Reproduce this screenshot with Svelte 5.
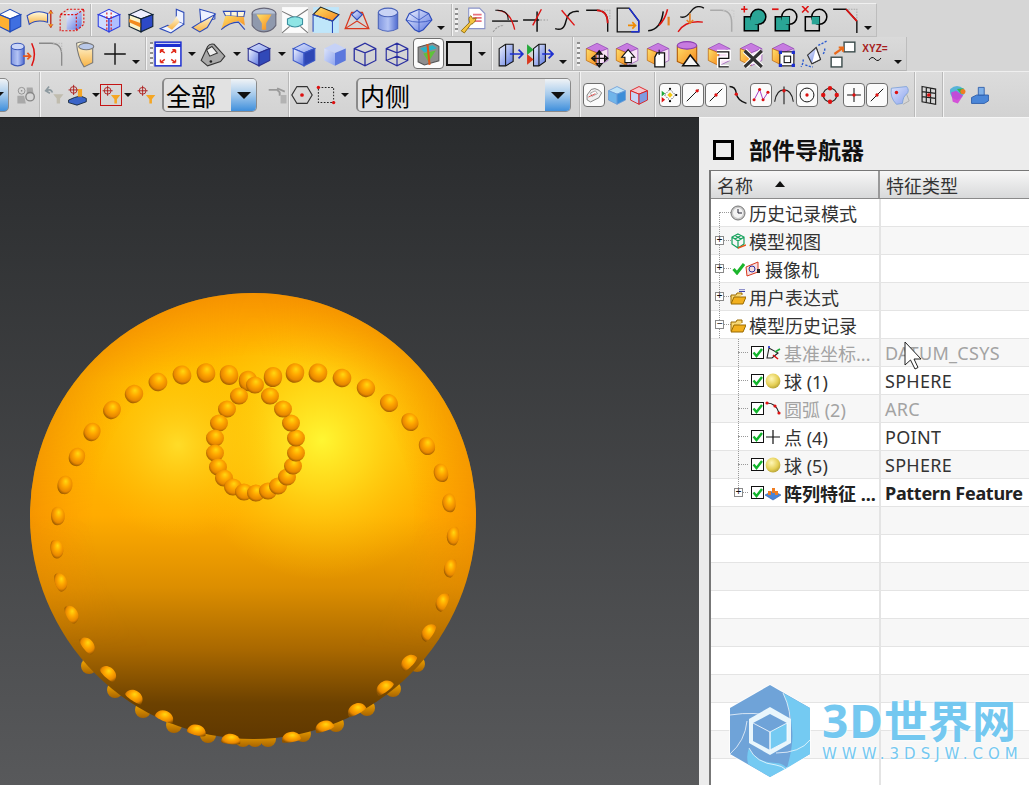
<script lang="ts">
    // small builders for the toolbar glyphs, all on a 26x26 box
    const cube = (t, f, s, st = "#1c2fa8") =>
        `<path d="M3 8 13 3 23 8 13 12Z" fill="${t}" stroke="${st}"/><path d="M3 8 13 12V24L3 19Z" fill="${f}" stroke="${st}"/><path d="M23 8 13 12V24L23 19Z" fill="${s}" stroke="${st}"/>`;
    const opCube = (extra) =>
        `<path d="M4 8 14 3 24 8 14 12Z" fill="#c77be0" stroke="#8a3fb0" stroke-width=".6"/><path d="M4 8 14 12V24L4 19Z" fill="url(#gOrange)" stroke="#b35a00" stroke-width=".6"/><path d="M24 8 14 12V24L24 19Z" fill="#f7e2f5" stroke="#8a3fb0" stroke-width=".6"/>${extra}`;
    const boole = (sq, ci, mark) =>
        `<rect x="4" y="10" width="13" height="13" fill="${sq}" stroke="#000" stroke-width="1.4"/><circle cx="17" cy="10" r="7" fill="${ci}" stroke="#000" stroke-width="1.4"/><path d="M10 10h7v7h-7z" fill="#2aa596"/>${mark}`;

    const icons = {
        op0: cube("#fff", "#ffb030", "#3f6fe0", "#204ab8"),
        band: `<path d="M1 9Q10 3 20 7V15Q10 12 3 17Z" fill="url(#gYellow)" stroke="#2b49b8"/><path d="M23 4V20" stroke="#c0392b" stroke-width="1.4"/><path d="M21 7l2-3 2 3M21 17l2 3 2-3" fill="#f39c12" stroke="#c0392b" stroke-width=".7"/>`,
        rbox: `<path d="M8 22V9Q8 5 13 5H22V16Q22 22 16 22Z" fill="url(#gBlue)"/><path d="M2 21V8L9 3H24V17L17 23H2ZM2 8H17V23M17 8 24 3" fill="none" stroke="#d11" stroke-dasharray="2 1.4"/>`,
        bcut: cube("#eef2ff", "#cfdcff", "#aebfff", "#2f3fe0") + `<path d="M11 6V22M15 6V22" stroke="#d11" stroke-dasharray="2 1.5"/>`,
        bstripe: `<path d="M2 8 13 3 24 8 13 12Z" fill="#eef" stroke="#123"/><path d="M2 8 13 12V24L2 19Z" fill="#f9f3c9" stroke="#123"/><path d="M2 12 13 16V20L2 15Z" fill="#f38a1d"/><path d="M24 8 13 12V24L24 19Z" fill="#2d49c8" stroke="#123"/>`,
        sheet1: `<path d="M17 3 24 6V17L17 14Z" fill="#eef2ff" stroke="#2b49b8"/><path d="M17 14Q16 20 9 18L2 21 12 25 24 17" fill="#f0f4ff" stroke="#2b49b8"/><path d="M17 9Q14 17 8 19L13 22 20 15Z" fill="url(#gYellow)"/>`,
        sheet2: `<path d="M10 3 24 7V12L11 15Z" fill="#eef2ff" stroke="#2b49b8"/><path d="M11 15 3 20 10 24 17 20 24 8Z" fill="url(#gYellow)" stroke="#2b49b8"/>`,
        sheet3: `<path d="M4 5 24 5 23 10 6 9Z" fill="#fff6d9" stroke="#2b49b8"/><path d="M6 9 23 10 24 18 18 14Q10 15 2 22Z" fill="url(#gOrange)"/><path d="M2 22Q10 15 18 15L24 22" fill="none" stroke="#2b49b8"/><path d="M11 5V9M17 5V10" stroke="#2b49b8"/>`,
        funnel: `<ellipse cx="13" cy="7" rx="11" ry="5" fill="#b9c4d8" stroke="#667"/><path d="M2 7V18Q6 24 13 24 20 24 24 18V7" fill="#8f99ad" stroke="#667"/><path d="M6 8H20L15 16V22H11V16Z" fill="url(#gOrange)"/>`,
        corner: `<rect x="1" y="1" width="24" height="24" fill="#fbfbfb"/><path d="M1 5 13 11 25 3M1 25 8 19M25 25 18 19" stroke="#777" fill="none"/><path d="M6 12Q13 8 20 12V17Q13 22 6 17Z" fill="#8ee5e5" stroke="#3a8f9f"/>`,
        slab: `<rect x="1" y="1" width="24" height="24" fill="#bfe6fa"/><path d="M1 8 8 1 25 8 19 14Z" fill="url(#gOrange)" stroke="#222"/><path d="M1 8V24M19 14V25M1 8 19 14M19 14 25 8" stroke="#2b49b8" fill="none"/>`,
        pyr: `<path d="M2 21 8 6H18L24 21Z" fill="none" stroke="#d9381e" stroke-width="1.2"/><path d="M13 14 2 21M13 14 24 21" stroke="#d9381e"/><path d="M8 8 13 4 18 8 13 13Z" fill="url(#gBlue)" stroke="#2b49b8"/>`,
        cyl: `<path d="M4 6V21Q13 26 22 21V6" fill="url(#gBlueH)" stroke="#4a62b8"/><ellipse cx="13" cy="6" rx="9" ry="4" fill="#c9d3f5" stroke="#4a62b8"/>`,
        diam: `<path d="M13 3 22 7 25 13 17 22 13 24 9 22 1 13 4 7Z" fill="url(#gBlue)" stroke="#2b49b8"/><path d="M1 13Q13 17 25 13M4 7 13 13 22 7M13 3V24" stroke="#2b49b8" fill="none" stroke-width=".7"/>`,
        wrench: `<path d="M9 2H19L24 7V21H9Z" fill="#fff" stroke="#8b94c9"/><path d="M13 8H21M13 11H21M13 14H21" stroke="#e8737f" stroke-width="1.6"/><path d="M2 23 10 15Q8 11 11 9L13 12 16 11 15 14Q13 17 11 17L5 25Z" fill="#f5c542" stroke="#8a6500" stroke-width=".8"/>`,
        tr1: `<path d="M1 14H25" stroke="#111" stroke-width="1.3"/><path d="M6 4Q18 4 22 22" fill="none" stroke="#d11" stroke-width="1.2" /><path d="M4 4Q16 3 16 13" fill="none" stroke="#111"/><path d="M2 24Q6 18 12 18" fill="none" stroke="#999" stroke-dasharray="2 1"/>`,
        tr2: `<path d="M1 13H16M14 5V24" stroke="#111" stroke-width="1.4"/><path d="M18 3 10 18" stroke="#d11" stroke-width="1.3"/><path d="M17 13H24M14 3" stroke="#999" stroke-dasharray="1.5 1.5"/>`,
        tr3: `<path d="M2 21Q10 24 12 14 14 4 24 5" fill="none" stroke="#111" stroke-width="1.4"/><path d="M8 4 20 18" stroke="#d11" stroke-width="1.3"/>`,
        fil: `<path d="M2 4H12Q22 4 22 16V24" fill="none" stroke="#111" stroke-width="1.3"/><path d="M12 4Q22 4 22 16" fill="none" stroke="#d11" stroke-width="1.6"/><path d="M16 4H24V12" fill="none" stroke="#aaa" stroke-dasharray="1.5 1"/>`,
        doc: `<path d="M3 2V24H23V14L14 2Z" fill="none" stroke="#111" stroke-width="1.2"/><path d="M14 2 23 14V24H16" fill="none" stroke="#1d2fd0" stroke-width="1.4"/><path d="M13 18H20M17 15l3 3-3 3" fill="none" stroke="#f08a00" stroke-width="1.5"/>`,
        arcs: `<path d="M2 23Q14 22 16 5" fill="none" stroke="#111" stroke-width="1.4"/><path d="M12 18Q18 12 20 3" fill="none" stroke="#d11" stroke-width="1.4"/><path d="M21 10V18" stroke="#e67e22" stroke-width="2"/>`,
        arrs: `<path d="M3 10Q8 12 13 5T25 2" fill="none" stroke="#111" stroke-width="1.2"/><path d="M1 24Q8 13 24 15" fill="none" stroke="#d11" stroke-width="1.3"/><path d="M12 7V16M9 13l3 3 3-3" fill="none" stroke="#e67e22" stroke-width="1.5"/>`,
        filg: `<path d="M2 4H12Q22 4 22 16V24" fill="none" stroke="#aaa" stroke-width="1.4"/><path d="M14 4H24V12" fill="none" stroke="#ccc" stroke-dasharray="1.5 1"/>`,
        unite: boole("#2aa596", "#2aa596", `<path d="M1 3H7M4 0V6" stroke="#d11" stroke-width="1.4"/>`),
        subt: boole("#2aa596", "none", `<path d="M1 3H7" stroke="#d11" stroke-width="1.6"/>`),
        inter: boole("none", "none", `<path d="M1 0 7 6M7 0 1 6" stroke="#d11" stroke-width="1.4"/>`),
        chamf: `<path d="M2 3H14L24 14V25" fill="none" stroke="#111" stroke-width="1.3"/><path d="M14 3 24 14" stroke="#d11" stroke-width="1.6"/><path d="M16 3H24V12" fill="none" stroke="#aaa" stroke-dasharray="1.5 1"/>`,

        extr: `<path d="M3 6V22Q9 26 15 22V6" fill="url(#gBlueH)" stroke="#3b57b8"/><ellipse cx="9" cy="6" rx="6" ry="3" fill="#cbd6f7" stroke="#3b57b8"/><path d="M14 15H21M18 12l3 3-3 3" fill="none" stroke="#e8561b" stroke-width="1.6"/><path d="M22 3Q27 13 22 24" fill="none" stroke="#d11" stroke-width="1.4"/>`,
        filg2: `<path d="M1 3H12Q22 3 22 14V24" fill="none" stroke="#888" stroke-width="1.2"/><path d="M14 3H22V11" fill="none" stroke="#bbb" stroke-dasharray="1.5 1"/>`,
        shell: `<path d="M7 3Q14 0 22 5V21L14 25Q8 16 7 3Z" fill="url(#gYellow)" stroke="#777"/><ellipse cx="16" cy="6" rx="7" ry="3" fill="#b9c8e8" stroke="#777"/>`,
        plus: `<path d="M13 3V23M3 13H23" stroke="#111" stroke-width="1.3"/>`,
        fit: `<rect x="1" y="2" width="24" height="22" fill="#fff" stroke="#1d2fd0" stroke-width="1.4"/><path d="M1 5H25" stroke="#1d2fd0" stroke-width="3"/><path d="M6 9l4 3M6 9v3M6 9h3M20 9l-4 3M20 9v3M20 9h-3M6 21l4-3M6 21v-3M6 21h3M20 21l-4-3M20 21v-3M20 21h-3" stroke="#e02b1b" stroke-width="1.3" fill="none"/>`,
        scan: `<path d="M2 19 8 6Q10 3 14 4L24 15 20 20 8 24Z" fill="#a9a9a9" stroke="#333"/><path d="M7 9 12 6 17 12 10 15Z" fill="#eee" stroke="#333"/><circle cx="11" cy="20" r="1.2" fill="#222"/>`,
        solid: cube("url(#gBlueL)", "url(#gBlue)", "#3149b8", "#2a2f8f"),
        solid2: cube("url(#gBlueL)", "url(#gBlue)", "#2e47b5", "#3c59c8"),
        solid3: cube("#c6d2f7", "url(#gBlueL)", "#5c78dd", "none"),
        wire: `<path d="M3 8 13 3 23 8V19L13 24 3 19Z M3 8 13 12 23 8M13 12V24" fill="none" stroke="#2a2fa0" stroke-width="1.2"/>`,
        wire2: `<path d="M3 8 13 3 23 8V19L13 24 3 19Z M3 8 13 12 23 8M13 12V24M3 19 13 15 23 19M13 3V15" fill="none" stroke="#2a2fa0" stroke-width="1.1"/>`,
        view: `<path d="M3 7 17 3 23 6V20L9 24 3 21Z" fill="#8e8e8e" stroke="#555"/><path d="M5 8 17 5 21 8 9 12Z" fill="#29b5c9"/><path d="M8 13 20 10 13 21Z" fill="#5ec33a"/><path d="M12 4 14 24" stroke="#e0561b" stroke-width="2"/>`,
        mir: `<path d="M2 8 8 4H15V20L8 24H2Z" fill="url(#gBlue)" stroke="#111"/><path d="M8 4V24" stroke="#111"/><path d="M12 13H24M20 9l4 4-4 4" fill="none" stroke="#1d2fd0" stroke-width="1.6"/>`,
        mir2: `<path d="M7 8 12 4H18V20L12 24H7Z" fill="url(#gBlue)" stroke="#111"/><path d="M12 4V24" stroke="#111"/><path d="M1 4 7 9 1 14Z" fill="#25a83a"/><path d="M1 13 7 18 1 23Z" fill="#d9381e"/><path d="M15 13H25M21 9l4 4-4 4" fill="none" stroke="#1d2fd0" stroke-width="1.6"/>`,
        move: opCube(`<path d="M16 10V25M9 17H24M16 10l-2.5 3h5ZM16 25l-2.5-3h5ZM9 17l3-2.5v5ZM24 17l-3-2.5v5Z" fill="#fff" stroke="#111" stroke-width="1.2"/>`),
        push: opCube(`<path d="M15 9 21 16H18V21H12V16H9Z" fill="#fff" stroke="#111"/><path d="M7 24H23" stroke="#111" stroke-width="2"/>`),
        offs: opCube(`<path d="M13 12H20V25H11V16Z" fill="#fff" stroke="#111" stroke-width="1.2"/><path d="M15 9V14" stroke="#111"/>`),
        draft: `<path d="M4 5V20Q13 25 22 20V5" fill="url(#gOrange)" stroke="#b35a00"/><ellipse cx="13" cy="5" rx="9" ry="3.5" fill="#c77be0" stroke="#8a3fb0"/><path d="M16 14 24 24H9Z" fill="#f5f5f5" stroke="#111" stroke-width="1.4"/>`,
        repl: opCube(`<path d="M12 11H23V17H14V25H23" fill="none" stroke="#fff" stroke-width="4"/><path d="M12 11H23V17H14V25H23" fill="none" stroke="#111" stroke-width="1.2"/>`),
        del: opCube(`<path d="M8 10 24 25M24 10 8 25" stroke="#fff" stroke-width="5"/><path d="M8 10 24 25M24 10 8 25" stroke="#333" stroke-width="3"/>`),
        boxs: opCube(`<rect x="11" y="11" width="13" height="13" fill="#fff" stroke="#111"/><rect x="15" y="15" width="6" height="6" fill="none" stroke="#111"/><path d="M10 10h3v3h-3zM22 10h3v3h-3zM10 22h3v3h-3zM22 22h3v3h-3z" fill="#1d2fd0"/>`),
        mirf: `<path d="M7 14 15 7 19 18 11 22Z" fill="url(#gBlue)" stroke="#333"/><path d="M15 7 19 18 11 22" fill="#fff" stroke="#333"/><path d="M17 5Q21 3 25 1M3 18Q3 22 1 25M23 8Q23 11 21 14M5 23Q9 25 12 25" fill="none" stroke="#2b5bd0" stroke-width="1.3" stroke-dasharray="2 1.3"/>`,
        blocks: `<rect x="2" y="16" width="10" height="9" fill="#fff" stroke="#3b4b4b" stroke-width="1.3"/><rect x="14" y="2" width="10" height="9" fill="#fff" stroke="#3b4b4b" stroke-width="1.3"/><path d="M5 13 12 8M9 7H13V11" fill="none" stroke="#ea6a1b" stroke-width="2"/>`,

        filtg: `<path d="M2 8Q8 5 10 10M6 3 2 8 7 11" fill="none" stroke="#8d9aa0" stroke-width="2"/><path d="M11 12H23L19 17V23H15V17Z" fill="#c0bcae"/>`,
        filtb: `<circle cx="9" cy="7" r="4" fill="none" stroke="#a11"/><path d="M9 1V13M3 7H15" stroke="#a11"/><path d="M3 19 10 16 17 14 24 17V21L13 25 3 22Z" fill="#3a64c8" stroke="#123"/><rect x="14" y="6" width="5" height="9" fill="#f5a623"/>`,
        filtr: `<circle cx="9" cy="8" r="4" fill="none" stroke="#a11"/><path d="M9 2V14M3 8H15" stroke="#a11"/><path d="M13 13H24L20 18V23H17V18Z" fill="#f5a623"/>`,
        grayc: `<circle cx="9" cy="8" r="4" fill="none" stroke="#8a8a8a"/><circle cx="9" cy="8" r="1" fill="#8a8a8a"/><path d="M15 4h7l1 7h-8zM4 14h8l2 9H4z" fill="#a8a8a8"/><circle cx="19" cy="15" r="5" fill="none" stroke="#888" stroke-width="1.6"/>`,
        grayf: `<path d="M2 7H12L15 10V14M12 5 21 9" fill="none" stroke="#9a9a9a" stroke-width="2.2"/><rect x="16" y="13" width="7" height="10" fill="#b3b3b3"/>`,
        hexr: `<path d="M7 3H19L25 13 19 23H7L1 13Z" fill="none" stroke="#333" stroke-width="1.4"/><circle cx="13" cy="13" r="2.2" fill="#d11"/>`,
        rectr: `<rect x="4" y="4" width="18" height="18" fill="none" stroke="#222" stroke-width="1.2" stroke-dasharray="2 1.8"/><circle cx="4" cy="4" r="2" fill="#d11"/><circle cx="22" cy="22" r="2" fill="#d11"/>`,
        snap0: `<path d="M3 13 9 5Q14 2 20 6L24 10 20 17 8 23 3 20Z" fill="#f0f0f0" stroke="#555"/><path d="M8 10 15 7 18 11 10 15Z" fill="#fff" stroke="#888"/><path d="M5 16 15 11" stroke="#d11"/>`,
        bcube: cube("#bfe3f7", "#6fb5ea", "#3d8ed8", "#6c9cd8"),
        rcube: cube("#f5c8d0", "#c7d4f5", "#7f9be0", "#d11"),
        spt: `<path d="M13 5 21 13 13 21 5 13Z" fill="none" stroke="#111" stroke-dasharray="2 1.5"/><path d="M9 13 13 9 17 13 13 17Z" fill="#f2c713"/><path d="M1 7 6 11 1 15Z" fill="#1fa83a"/><path d="M1 16 6 20 1 24Z" fill="#d11"/><circle cx="13" cy="4" r="1.6"/><circle cx="22" cy="13" r="1.6"/><circle cx="13" cy="22" r="1.6"/>`,
        lne: `<path d="M4 22 21 5" stroke="#111" stroke-width="1.4"/><circle cx="19" cy="7" r="2.4" fill="#d11"/>`,
        lnm: `<path d="M4 22 22 4" stroke="#111" stroke-width="1.4"/><circle cx="13" cy="13" r="2.4" fill="#d11"/>`,
        scurv: `<path d="M3 3Q10 3 11 11T23 23" fill="none" stroke="#111" stroke-width="1.6"/><circle cx="11" cy="12" r="2" fill="#d11"/>`,
        ctrl: `<path d="M3 20 11 5 16 20 23 9" fill="none" stroke="#9d2bbd" stroke-width="1.3"/><circle cx="3" cy="20" r="2.2" fill="#d11"/><circle cx="11" cy="5" r="2.2" fill="#d11"/><circle cx="16" cy="20" r="2.2" fill="#d11"/><circle cx="23" cy="9" r="2.2" fill="#d11"/>`,
        tang: `<path d="M2 21Q4 7 13 7T24 21M13 3V24" fill="none" stroke="#222" stroke-width="1.3"/><circle cx="13" cy="8" r="2" fill="#d11"/>`,
        ctr: `<circle cx="13" cy="13" r="10" fill="none" stroke="#111" stroke-width="1.4"/><circle cx="13" cy="13" r="2.4" fill="#d11"/>`,
        qua: `<circle cx="13" cy="13" r="8" fill="none" stroke="#222" stroke-width="1.3"/><circle cx="13" cy="5" r="2.6" fill="#d11"/><circle cx="13" cy="21" r="2.6" fill="#d11"/><circle cx="5" cy="13" r="2.6" fill="#d11"/><circle cx="21" cy="13" r="2.6" fill="#d11"/>`,
        isec: `<path d="M13 3V23M3 13H23" stroke="#111" stroke-width="1.5"/><circle cx="13" cy="13" r="2.4" fill="#d11"/>`,
        fsrf: `<path d="M4 5 22 3Q26 8 22 12 18 14 17 23L10 24Q2 16 4 5Z" fill="url(#gBlueL)" stroke="#7ba0d8"/><circle cx="10" cy="10" r="2" fill="#d11"/><path d="M22 12 25 20 18 24" fill="none" stroke="#aaa"/>`,
        grid: `<path d="M6 3 22 6V24L6 21ZM6 9 22 11M6 15 22 17M11 4V22M16 5V23" fill="none" stroke="#222" stroke-width="1.4"/><circle cx="14" cy="13" r="2.2" fill="#d11"/>`,
        prt: `<path d="M5 6Q13 -1 21 6 24 14 13 19 3 15 5 6Z" fill="#56b3d8"/><path d="M6 10 12 8 20 14 14 23 8 21Z" fill="#d43bd8" opacity=".85"/><path d="M13 6 21 5 18 12Z" fill="#35b54a"/><circle cx="20" cy="9" r="3" fill="#ef7d22"/>`,
        tray: `<path d="M3 16 9 13H23V20L18 23H3Z" fill="#4a86d8" stroke="#2a5aa8"/><path d="M11 4H18V13H11Z" fill="#7fb0e8" stroke="#2a5aa8"/>`
    };

    // [kind, centre x, optional modifier]; kinds without a glyph are handled in the markup
    const row1 = [
        ["op0", 10], ["band", 40], ["rbox", 72], ["sep", 91], ["bcut", 109], ["bstripe", 141], ["sheet1", 172], ["sheet2", 203],
        ["sheet3", 233], ["funnel", 264], ["corner", 295], ["slab", 326], ["pyr", 357], ["cyl", 388], ["diam", 419], ["caret", 441, "low"],
        ["sep", 452], ["handle", 456], ["wrench", 473], ["tr1", 505], ["tr2", 536], ["tr3", 567], ["fil", 598], ["doc", 628],
        ["arcs", 660], ["arrs", 691], ["filg", 722], ["unite", 754], ["subt", 785], ["inter", 815], ["chamf", 845], ["caret", 868, "low"]
    ];
    const row2 = [
        ["extr", 22], ["filg2", 52], ["shell", 83], ["plus", 115], ["caret", 136, "low"], ["sep", 146], ["handle", 151], ["fit", 168],
        ["caret", 192], ["scan", 213], ["caret", 237], ["solid", 259], ["caret", 282], ["solid2", 304], ["solid3", 335], ["wire", 365],
        ["wire2", 397], ["view", 428.5, "box big"], ["swatch", 459], ["caret", 482], ["sep", 492], ["mir", 511], ["mir2", 540], ["caret", 563, "low"],
        ["sep", 573], ["handle", 578], ["move", 596], ["push", 626], ["offs", 657], ["draft", 687], ["repl", 718], ["del", 750],
        ["boxs", 782], ["mirf", 814], ["blocks", 843], ["xyz", 875], ["caret", 898, "low"]
    ];
    const row3 = [
        ["arrow", -3], ["grayc", 25], ["sep", 40], ["filtg", 55], ["filtb", 77], ["caret", 96], ["filtr", 111, "red"], ["caret", 128],
        ["filtr", 146], ["combo1", 209.5], ["grayf", 278], ["sep", 289], ["hexr", 302], ["rectr", 326], ["caret", 345], ["combo2", 463.5],
        ["sep", 580], ["snap0", 594, "box"], ["bcube", 617], ["rcube", 639], ["sep", 655], ["spt", 670, "box"], ["lne", 692.5, "box"],
        ["lnm", 715.5, "box"], ["scurv", 738], ["ctrl", 761, "box"], ["tang", 784], ["ctr", 807, "box"], ["qua", 830], ["isec", 853.5, "box"],
        ["lnm", 876.5, "box"], ["fsrf", 899], ["sep", 915], ["grid", 928], ["sep", 943], ["prt", 957], ["tray", 980]
    ];

    const widths = { sep: 2, handle: 3, caret: 8, swatch: 26, combo1: 95, combo2: 215, arrow: 24, xyz: 24 };
    function place(list, size) {
        let right = 0;
        return list.map(([kind, cx, mod]) => {
            let w = widths[kind] ?? size;
            if (mod === "box") w = 22;
            if (mod === "box big") w = 31;
            const left = cx - w / 2;
            const gap = left - right;
            right = left + w;
            return { kind, w, gap, mod };
        });
    }
    const rows = [place(row1, 28), place(row2, 28), place(row3, 22)];

    // beads, as read off the model; back ones sit behind the sphere's rim
    const front = [
        [58,516],[65,485],[77,457],[92,432],[112,410],[134,394],[158,382],[182,375],[206,373],[229,375],[248,381],
        [273,377],[295,373],[318,373],[342,378],[366,388],[389,403],[410,422],[427,446],[441,473],[449,503],
        [453,536],[450,568],[442,602],[428,632],[408,662],[384,687],[356,709],[324,726],[291,737],
        [57,549],[61,582],[72,614],[88,645],[109,673],[135,696],[165,716],[197,730],[231,739]
    ];
    const back = [
        [89,669],[115,693],[143,713],[174,728],[208,738],[243,742],[255,742],[268,742],[303,737],[336,727],[367,711],[393,692],[417,667]
    ];
    const loop = [
        [239,396],[227,409],[219,423],[215,438],[215,453],[218,467],[224,478],[233,487],[244,492],[256,493],[268,491],[278,486],
        [287,477],[293,466],[296,453],[296,438],[291,423],[283,409],[270,396],[255,385]
    ];
    const cx = 253, cy = 516, R = 223;

    // a bead foreshortens toward the rim: round near the middle, a flat-bottomed dome at the edge
    function beadPath([x, y], r) {
        const dx = x - cx, dy = y - cy;
        const len = Math.hypot(dx, dy);
        const d = Math.min(len / R, 0.99);
        const nx = dx / len, ny = dy / len;
        const sq = Math.max(0.72, Math.sqrt(1 - d * d) + 0.32);
        const k = Math.min(Math.max((d - 0.84) / 0.13, 0), 1);
        const up = r * (sq + (0.95 - sq) * k);
        const down = r * (sq + (0.2 - sq) * k);
        const w = r * (1 + 0.05 * k);
        const mx = x + (nx * (up - down)) / 2, my = y + (ny * (up - down)) / 2;
        const ax = mx + ny * w, ay = my - nx * w;
        const bx = mx - ny * w, by = my + nx * w;
        const c = (px, py, h) => `${(px + nx * h * 1.33).toFixed(1)} ${(py + ny * h * 1.33).toFixed(1)}`;
        return `M${ax.toFixed(1)} ${ay.toFixed(1)}C${c(ax, ay, -up)} ${c(bx, by, -up)} ${bx.toFixed(1)} ${by.toFixed(1)}C${c(bx, by, down)} ${c(ax, ay, down)} ${ax.toFixed(1)} ${ay.toFixed(1)}Z`;
    }
    const frontBeads = front.map((p) => beadPath(p, 9.2));
    const loopBeads = loop.map((p) => ({ x: p[0], y: p[1], rx: 9, ry: 8.6 }));

    const nodes = [
        { icon: "clock", label: "历史记录模式", exp: "", lvl: 0 },
        { icon: "views", label: "模型视图", exp: "+", lvl: 0 },
        { icon: "camera", label: "摄像机", exp: "+", lvl: 0, tick: true },
        { icon: "folderx", label: "用户表达式", exp: "+", lvl: 0 },
        { icon: "folder", label: "模型历史记录", exp: "-", lvl: 0 },
        { icon: "csys", label: "基准坐标...", type: "DATUM_CSYS", lvl: 1, dim: true },
        { icon: "ball", label: "球 (1)", type: "SPHERE", lvl: 1 },
        { icon: "arc", label: "圆弧 (2)", type: "ARC", lvl: 1, dim: true },
        { icon: "pt", label: "点 (4)", type: "POINT", lvl: 1 },
        { icon: "ball", label: "球 (5)", type: "SPHERE", lvl: 1 },
        { icon: "pattern", label: "阵列特征 ...", type: "Pattern Feature", lvl: 1, bold: true, exp: "+" }
    ];
    const blanks = Array.from({ length: 10 }, (_, i) => i);

    const small = {
        clock: `<circle cx="8" cy="8" r="7" fill="#c9c9c9" stroke="#777"/><circle cx="8" cy="8" r="5" fill="#f4f4f4"/><path d="M8 4V8H12" stroke="#223" fill="none"/>`,
        views: `<path d="M8 1 14 4V11L8 15 2 11V4ZM2 4 8 8 14 4M8 8V15M5 2.5 11 6M11 2.5 5 6" fill="none" stroke="#12a05a" stroke-width="1.2"/><path d="M8 15 16 12" stroke="#e8561b" stroke-width="1.4"/>`,
        camera: `<path d="M1 6 13 1V11L2 15Z" fill="#f6dfe0" stroke="#d9381e"/><circle cx="7" cy="8" r="3" fill="none" stroke="#2a2fa0"/><rect x="12" y="8" width="3" height="4" fill="#222"/>`,
        folderx: `<path d="M1 14V6H6L7 4H12V6" fill="#f7d774" stroke="#9a6a00"/><path d="M1 15 4 8H16L13 15Z" fill="#f2b01e" stroke="#9a6a00"/><path d="M9 0H15M9 2.4H15" stroke="#2a2fa0"/>`,
        folder: `<path d="M1 14V5H6L7 3H12V6" fill="#f7d774" stroke="#9a6a00"/><path d="M1 15 4 8H16L13 15Z" fill="#f2b01e" stroke="#9a6a00"/>`,
        csys: `<path d="M2 13 4 3 13 8 7 13Z" fill="none" stroke="#222" stroke-width="1.1"/><path d="M4 3V1" stroke="#1d2fd0" stroke-width="1.6"/><path d="M10 7 15 4" stroke="#1fa83a" stroke-width="1.6"/><path d="M8 10 13 14" stroke="#d11" stroke-width="1.6"/>`,
        ball: `<circle cx="8" cy="8" r="7.4" fill="url(#gBall)"/>`,
        arc: `<path d="M2 2Q11 2 14 12" fill="none" stroke="#222" stroke-width="1.2"/><circle cx="2" cy="2" r="1.6" fill="#d11"/><circle cx="10" cy="5" r="1.6" fill="#d11"/><circle cx="14" cy="12" r="1.6" fill="#d11"/>`,
        pt: `<path d="M8 1V15M1 8H15" stroke="#111" stroke-width="1.2"/>`,
        pattern: `<path d="M0 10 8 6 16 10 8 15Z" fill="#4b84d6" stroke="#2a5aa8" stroke-width=".6"/><rect x="3" y="6" width="3" height="4" fill="#ef7d22"/><rect x="7" y="3" width="3" height="5" fill="#ef7d22"/><rect x="10" y="6" width="3" height="4" fill="#ef7d22"/>`
    };
</script>

<svg class="defs" aria-hidden="true">
    <defs>
        <linearGradient id="gBlue" x1="0" y1="0" x2="1" y2="1"><stop offset="0" stop-color="#f2f5ff" /><stop offset="1" stop-color="#5a76e0" /></linearGradient>
        <linearGradient id="gBlueL" x1="0" y1="0" x2="1" y2="1"><stop offset="0" stop-color="#dbe3fb" /><stop offset="1" stop-color="#8ea4ee" /></linearGradient>
        <linearGradient id="gBlueH" x1="0" y1="0" x2="1" y2="0"><stop offset="0" stop-color="#7f95e0" /><stop offset=".5" stop-color="#b4c4f5" /><stop offset="1" stop-color="#4f6bd0" /></linearGradient>
        <linearGradient id="gYellow" x1="0" y1="0" x2="0" y2="1"><stop offset="0" stop-color="#fffbe0" /><stop offset="1" stop-color="#f8b344" /></linearGradient>
        <linearGradient id="gOrange" x1="0" y1="0" x2="1" y2="1"><stop offset="0" stop-color="#ffe16a" /><stop offset="1" stop-color="#f5871c" /></linearGradient>
        <radialGradient id="gBall" cx=".4" cy=".35" r=".75"><stop offset="0" stop-color="#fff7b8" /><stop offset=".6" stop-color="#e5cf55" /><stop offset="1" stop-color="#a8952c" /></radialGradient>
    </defs>
</svg>

<div class="app">
    <header class="bars">
        {#each rows as row, r}
            <div class="bar bar{r + 1}">
                {#each row as t}
                    {#if t.kind === "sep"}
                        <span class="sep" style="margin-left:{t.gap}px"></span>
                    {:else if t.kind === "handle"}
                        <span class="handle" style="margin-left:{t.gap}px"></span>
                    {:else if t.kind === "caret"}
                        <span class="caret {t.mod ?? ''}" style="margin-left:{t.gap}px"></span>
                    {:else if t.kind === "swatch"}
                        <span class="swatch" style="margin-left:{t.gap}px"></span>
                    {:else if t.kind === "xyz"}
                        <span class="xyz" style="margin-left:{t.gap}px">
                            <b>XYZ=</b>
                            <svg width="24" height="10" viewBox="0 5 26 20"><path d="M1 17Q7 8 13 15T25 13" fill="none" stroke="#111" stroke-width="2" /></svg>
                        </span>
                    {:else if t.kind === "arrow"}
                        <span class="drop solo" style="margin-left:{t.gap}px"><i></i></span>
                    {:else if t.kind === "combo1" || t.kind === "combo2"}
                        <div class="combo" style="margin-left:{t.gap}px;width:{t.w}px">
                            <span>{t.kind === "combo1" ? "全部" : "内侧"}</span>
                            <span class="drop"><i></i></span>
                        </div>
                    {:else}
                        <svg class="tool {t.mod ?? ''}" style="margin-left:{t.gap}px;width:{t.w}px;height:{t.mod === 'box' ? 24 : t.mod === 'box big' ? 31 : t.w}px" viewBox="0 0 26 26">
                            {@html icons[t.kind]}
                        </svg>
                    {/if}
                {/each}
            </div>
        {/each}
    </header>

    <div class="work">
        <div class="viewport">
            <svg width="699" height="667" viewBox="0 118 699 667">
                <defs>
                    <linearGradient id="sBase" x1="0" y1="0" x2="0" y2="1">
                        <stop offset="0" stop-color="#ffa600" />
                        <stop offset=".2" stop-color="#ffc000" />
                        <stop offset=".5" stop-color="#ffab00" />
                        <stop offset=".66" stop-color="#dc8e00" />
                        <stop offset=".8" stop-color="#a96800" />
                        <stop offset=".92" stop-color="#6c4100" />
                        <stop offset="1" stop-color="#603800" />
                    </linearGradient>
                    <radialGradient id="sHi1"><stop offset="0" stop-color="#fff632" /><stop offset=".35" stop-color="#ffe01e" stop-opacity=".8" /><stop offset="1" stop-color="#ffc000" stop-opacity="0" /></radialGradient>
                    <radialGradient id="sHi2"><stop offset="0" stop-color="#ffdc28" /><stop offset="1" stop-color="#ffc000" stop-opacity="0" /></radialGradient>
                    <radialGradient id="sRim"><stop offset=".72" stop-color="#ff8a00" stop-opacity="0" /><stop offset="1" stop-color="#ec7f00" stop-opacity=".5" /></radialGradient>
                    <linearGradient id="rimFade" x1="0" y1="0" x2="0" y2="1"><stop offset=".5" stop-color="#fff" /><stop offset=".8" stop-color="#000" /></linearGradient>
                    <mask id="rimMask" maskUnits="userSpaceOnUse" x="20" y="280" width="470" height="470"><rect x="20" y="293" width="470" height="446" fill="url(#rimFade)" /></mask>
                    <clipPath id="ball"><circle cx="253" cy="516" r="223" /></clipPath>
                    <radialGradient id="bead" cx=".55" cy=".42" r=".62" fx=".55" fy=".3">
                        <stop offset="0" stop-color="#ffd810" />
                        <stop offset=".4" stop-color="#ffa800" />
                        <stop offset=".75" stop-color="#e98800" />
                        <stop offset="1" stop-color="#8f5400" />
                    </radialGradient>
                    <linearGradient id="beadBack" x1="0" y1="0" x2="0" y2="1"><stop offset="0" stop-color="#ffb000" /><stop offset="1" stop-color="#a86400" /></linearGradient>
                </defs>
                {#each back as b}
                    <circle cx={b[0]} cy={b[1] - 3} r="8" fill="url(#beadBack)" />
                {/each}
                <circle cx="253" cy="516" r="223" fill="url(#sBase)" />
                <g clip-path="url(#ball)">
                    <circle cx="322" cy="440" r="140" fill="url(#sHi1)" />
                    <circle cx="178" cy="445" r="95" fill="url(#sHi2)" />
                </g>
                <circle cx="253" cy="516" r="223" fill="url(#sRim)" mask="url(#rimMask)" />
                {#each frontBeads as d}
                    <path {d} fill="url(#bead)" />
                {/each}
                {#each loopBeads as b}
                    <ellipse cx={b.x} cy={b.y} rx={b.rx} ry={b.ry} fill="url(#bead)" />
                {/each}
            </svg>
        </div>

        <aside class="panel">
            <div class="title"><span class="win"></span><h1>部件导航器</h1></div>
            <div class="table">
                <div class="head">
                    <div class="hcell first">名称<span class="sort"></span></div>
                    <div class="hcell">特征类型</div>
                </div>
                {#each nodes as n, i}
                    <div class="row" class:alt={i % 2 === 1} class:dim={n.dim} class:bold={n.bold}>
                        <div class="cell name lvl{n.lvl}" class:branch={i > 0 && i < 5} class:last={i === 10}>
                            {#if n.exp}
                                <span class="exp">{n.exp === "+" ? "+" : "−"}</span>
                            {:else}
                                <span class="noexp"></span>
                            {/if}
                            {#if n.lvl === 1}
                                <svg class="check" viewBox="0 0 13 13" width="13" height="13"><rect x=".5" y=".5" width="12" height="12" fill="#fff" stroke="#111" /><path d="M2.5 6.5 5.5 10 11 3" fill="none" stroke="#12b52c" stroke-width="2.4" /></svg>
                            {/if}
                            {#if n.tick}
                                <svg class="tick" viewBox="0 0 13 13" width="13" height="13"><path d="M1.5 7 5 11 12 2" fill="none" stroke="#1cb52c" stroke-width="3" /></svg>
                            {/if}
                            <svg class="nicon" viewBox="0 0 16 16" width="16" height="16">{@html small[n.icon]}</svg>
                            <span class="label">{n.label}</span>
                        </div>
                        <div class="cell type">{n.type ?? ""}</div>
                    </div>
                {/each}
                {#each blanks as b}
                    <div class="row" class:alt={b % 2 === 0}>
                        <div class="cell name"></div>
                        <div class="cell type"></div>
                    </div>
                {/each}
            </div>

            <svg class="pointer" width="20" height="30" viewBox="0 0 20 30"><path d="M1 1V24L6.500 19 11 28 14 26.500 10 18H17Z" fill="#fff" stroke="#222" /></svg>

            <div class="mark">
                <svg width="84" height="96" viewBox="-42 -48 84 96">
                    <path d="M0-47 41-23.500V23.500L0 47-41 23.500V-23.500Z" fill="#fff" opacity=".7" />
                    <path d="M0-46 40-23V23L0 46-40 23V-23Z" fill="#6fa3d8" />
                    <path d="M13-38 40-23V23L17 37Q24 12 22-2 21-22 13-38Z" fill="#74caf2" />
                    <path d="M-21 17Q-14 32 6 32 12 32 17 37L0 46-22 33Q-24 24-21 17Z" fill="#74caf2" />
                    <path d="M-40-16Q-15-20 6-14M13-38Q22-20 20 0M40 9Q30 22 6 22M-21 17Q-14 32 6 34 12 35 15 38M-40 23Q-25 10-23-10" fill="none" stroke="#fff" stroke-width=".9" opacity=".8" />
                    <path d="M0-24 21-12V12L0 24-21 12V-12Z" fill="#e9f6fc" />
                    <path d="M0-17 17-8V10L0 19-17 10V-8Z" fill="#6fa3d8" />
                    <path d="M0 1 17-8V10L0 19Z" fill="#74caf2" stroke="#fff" stroke-width=".8" />
                    <path d="M-17-8 0 1V19" fill="none" stroke="#fff" stroke-width=".8" />
                </svg>
                <div class="brand">
                    <div class="big"><span class="latin">3D</span>世界网</div>
                    <div class="url">WWW.3DSJW.COM</div>
                </div>
            </div>
        </aside>
    </div>
</div>

<style>
    :global(body) {
        margin: 0;
        overflow: hidden;
    }

    .defs {
        position: absolute;
        width: 0;
        height: 0;
    }

    .app {
        width: 1029px;
        height: 785px;
        display: flex;
        flex-direction: column;
        overflow: hidden;
        font-family: "Noto Sans", "Noto Sans CJK SC", sans-serif;
    }

    .bars {
        height: 118px;
        flex: none;
        display: flex;
        flex-direction: column;
        background: #d6d6d6;
    }

    .bar {
        display: flex;
        align-items: center;
        box-sizing: border-box;
        white-space: nowrap;
    }

    .bar > * {
        flex: none;
    }

    .bar1 {
        height: 34px;
        margin-top: 3px;
        width: 877px;
        background: linear-gradient(#dadada, #d2d2d2);
        border-top: 1px solid #f0f0f0;
        border-right: 1px solid #bdbdbd;
        border-bottom: 1px solid #bdbdbd;
    }

    .bar2 {
        height: 34px;
        width: 907px;
        background: linear-gradient(#dadada, #d0d0d0);
        border-right: 1px solid #bdbdbd;
        border-bottom: 1px solid #b5b5b5;
    }

    .bar3 {
        height: 47px;
        background: linear-gradient(#dcdcdc, #d2d2d2);
        border-top: 1px solid #efefef;
    }

    .sep {
        width: 2px;
        height: 100%;
        background: linear-gradient(90deg, #b9b9b9 50%, #f3f3f3 50%);
    }

    .handle {
        width: 3px;
        height: 24px;
        background: repeating-linear-gradient(#8e8e8e 0 2px, #f2f2f2 2px 5px);
    }

    .caret {
        width: 0;
        height: 0;
        box-sizing: content-box;
        border-left: 4px solid transparent;
        border-right: 4px solid transparent;
        border-top: 4px solid #111;
    }

    .caret.low {
        margin-top: 16px;
    }

    .tool.box {
        box-sizing: border-box;
        background: #fbfbfb;
        border: 1.5px solid #6e6e6e;
        border-radius: 4px;
        padding: 1px;
    }

    .tool.red {
        outline: 1.5px solid #c41414;
        outline-offset: -1px;
    }

    .swatch {
        box-sizing: border-box;
        width: 26px;
        height: 25px;
        background: #d8d8d8;
        border: 2px solid #111;
    }

    .xyz {
        width: 24px;
        display: flex;
        flex-direction: column;
        align-items: center;
        font: bold 10px/10px "Liberation Sans", sans-serif;
        color: #a61c1c;
    }

    .combo {
        box-sizing: border-box;
        height: 34px;
        display: flex;
        justify-content: space-between;
        border: 1px solid #8a8a8a;
        border-left-width: 2px;
        border-radius: 5px;
        background: #e2e2e2;
        overflow: hidden;
        font: 25px/32px "Noto Sans CJK SC", sans-serif;
        color: #000;
    }

    .combo span:first-child {
        padding-left: 2px;
    }

    .drop {
        width: 25px;
        display: flex;
        align-items: center;
        justify-content: center;
        background: linear-gradient(#f0f3f6, #a7cbec 48%, #3f8fdc);
    }

    .drop.solo {
        width: 24px;
        height: 34px;
        border: 1px solid #8a8a8a;
        border-radius: 5px;
        box-sizing: border-box;
    }

    .drop i {
        width: 0;
        height: 0;
        border-left: 7px solid transparent;
        border-right: 7px solid transparent;
        border-top: 7px solid #111;
    }

    .work {
        flex: 1;
        min-height: 0;
        display: flex;
        border-top: 1px solid #222;
        margin-top: -1px;
    }

    .viewport {
        width: 699px;
        flex: none;
        background: linear-gradient(#292b2d, #58595b);
    }

    .viewport svg {
        display: block;
    }

    .panel {
        flex: 1;
        position: relative;
        background: #ececec;
        border-top: 1px solid #f6f6f6;
        margin-top: -1px;
        overflow: hidden;
    }

    .title {
        height: 52px;
        display: flex;
        align-items: center;
        gap: 15px;
        padding-left: 14px;
        padding-top: 11px;
        box-sizing: border-box;
    }

    .win {
        width: 21px;
        height: 20px;
        box-sizing: border-box;
        border: 3px solid #000;
        background: #ececec;
    }

    h1 {
        margin: 0;
        font: bold 23px/1 "Noto Sans CJK SC", sans-serif;
        color: #111;
    }

    .table {
        margin-left: 10px;
        border-left: 2px solid #777;
        border-top: 1px solid #777;
        background: #fff;
    }

    .head {
        display: flex;
        height: 27px;
        border-bottom: 1px solid #8a8a8a;
        background: linear-gradient(#f7f7f7, #d8d9da);
        font: 18px/29px "Noto Sans CJK SC", sans-serif;
        color: #333;
    }

    .hcell {
        padding-left: 6px;
        flex: 1;
    }

    .hcell.first {
        width: 169px;
        flex: none;
        box-sizing: border-box;
        border-right: 2px solid #999;
        display: flex;
    }

    .sort {
        width: 0;
        height: 0;
        margin: 10px 0 0 22px;
        border-left: 5px solid transparent;
        border-right: 5px solid transparent;
        border-bottom: 6px solid #111;
    }

    .row {
        display: flex;
        height: 28px;
        box-sizing: border-box;
        border-bottom: 1px solid #e4e4e4;
        background: #fff;
        font-size: 18px;
        line-height: 27px;
        color: #333;
    }

    .row.alt {
        background: #f7f7f7;
    }

    .row.dim {
        color: #a3a3a3;
    }

    .row.bold {
        font-weight: bold;
        color: #222;
    }

    .label {
        padding-top: 3px;
    }

    .cell {
        white-space: nowrap;
        overflow: hidden;
    }

    .name {
        width: 170px;
        flex: none;
        box-sizing: border-box;
        border-right: 2px solid #e4e4e4;
        display: flex;
        align-items: center;
        position: relative;
        padding-left: 4px;
    }

    .name.lvl1 {
        padding-left: 23px;
    }

    .type {
        padding: 1px 0 0 4px;
        letter-spacing: 0.3px;
    }

    .bold .type {
        letter-spacing: -0.3px;
    }

    /* dotted tree guides */
    .name.lvl0::before {
        content: "";
        position: absolute;
        left: 8px;
        top: -1px;
        bottom: 0;
        border-left: 1px dotted #999;
    }

    .name.lvl0:not(.branch)::before {
        top: 13px;
    }

    .name.lvl1::before {
        content: "";
        position: absolute;
        left: 27px;
        top: -1px;
        bottom: 0;
        border-left: 1px dotted #999;
    }

    .name.last::before {
        bottom: 14px;
    }

    .name.lvl0::after,
    .name.lvl1::after {
        content: "";
        position: absolute;
        top: 13px;
        width: 12px;
        border-top: 1px dotted #999;
    }

    .name.lvl0::after {
        left: 8px;
    }

    .name.lvl1::after {
        left: 27px;
        width: 10px;
    }

    .exp {
        width: 9px;
        height: 9px;
        box-sizing: border-box;
        border: 1px solid #8a8a8a;
        background: #fff;
        font: 10px/7px "Liberation Mono", monospace;
        text-align: center;
        color: #111;
        flex: none;
        position: relative;
        z-index: 1;
    }

    .noexp {
        width: 9px;
        flex: none;
    }

    .lvl0 .nicon {
        margin-left: 6px;
        margin-right: 3px;
        position: relative;
        z-index: 1;
    }

    .lvl0 .tick {
        margin-left: 8px;
        position: relative;
        z-index: 1;
    }

    .lvl0 .tick + .nicon {
        margin-left: 0;
        margin-right: 4px;
    }

    .lvl1 .nicon {
        margin-left: 1px;
        margin-right: 3px;
    }

    .lvl1 .check {
        margin-left: 8px;
        position: relative;
        z-index: 1;
    }

    .pointer {
        position: absolute;
        left: 205px;
        top: 223px;
    }

    .mark {
        position: absolute;
        left: 29px;
        top: 565px;
        display: flex;
        gap: 10px;
    }

    .mark svg {
        flex: none;
    }

    .brand {
        margin-top: 14px;
        color: #74c8f0;
        text-shadow: 0 0 2px #fff, 0 0 3px #fff;
    }

    .big {
        font: bold 44px/44px "Noto Sans CJK SC", sans-serif;
        white-space: nowrap;
    }

    .latin {
        font-family: "Noto Sans", sans-serif;
        font-size: 46px;
        letter-spacing: 1px;
    }

    .url {
        margin-top: 5px;
        font: 15px/15px "DejaVu Sans", sans-serif;
        letter-spacing: 5px;
        white-space: nowrap;
    }
</style>
